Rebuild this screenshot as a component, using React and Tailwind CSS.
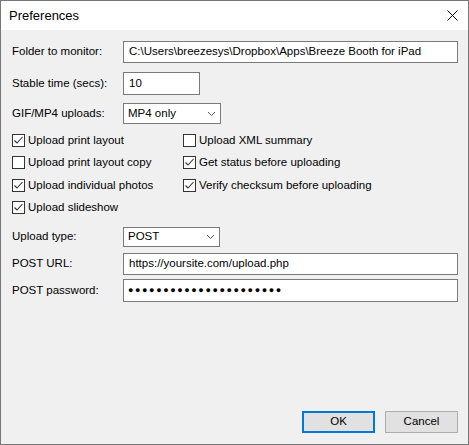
import React from 'react'

const font = { fontFamily: '"Liberation Sans", Arial, sans-serif' }

function Check({ checked, label }) {
  return (
    <div className="flex items-center h-[22.5px]">
      <div className="w-[13px] h-[13px] border border-[#333] bg-white flex items-center justify-center shrink-0">
        {checked && (
          <svg width="11" height="11" viewBox="0 0 11 11">
            <polyline points="1.5,5.5 4,8 9.5,2" fill="none" stroke="#333" strokeWidth="1.1" />
          </svg>
        )}
      </div>
      <span className="ml-[3px] text-[11.5px] text-black whitespace-nowrap">{label}</span>
    </div>
  )
}

function Chevron() {
  return (
    <svg width="9" height="6" viewBox="0 0 9 6" className="ml-auto mr-[4px]">
      <polyline points="1,1 4.5,4.5 8,1" fill="none" stroke="#555" strokeWidth="1" />
    </svg>
  )
}

function Row({ label, children, className }) {
  return (
    <div className={'flex items-center ' + (className || '')}>
      <div className="w-[111px] text-[11.5px] text-black whitespace-nowrap">{label}</div>
      {children}
    </div>
  )
}

export default function App() {
  return (
    <div className="w-[469px] h-[445px] border border-[#777] flex flex-col bg-[#f0f0f0]" style={font}>
      <div className="h-[29px] bg-white flex items-center pl-[8px] shrink-0">
        <span className="text-[13px] text-black">Preferences</span>
        <svg width="11" height="11" viewBox="0 0 11 11" className="ml-auto mr-[10px]">
          <path d="M0.5 0.5 L10.5 10.5 M10.5 0.5 L0.5 10.5" stroke="#000" strokeWidth="1" />
        </svg>
      </div>
      <div className="flex-1 flex flex-col pl-[11px] pr-[10px]">
        <Row label="Folder to monitor:" className="mt-[11px]">
          <div className="flex-1 h-[22px] bg-white border border-[#7a7a7a] flex items-center pl-[5px] text-[11.5px] whitespace-nowrap overflow-hidden">
            C:\Users\breezesys\Dropbox\Apps\Breeze Booth for iPad
          </div>
        </Row>
        <Row label="Stable time (secs):" className="mt-[9px]">
          <div className="w-[77px] h-[23px] bg-white border border-[#7a7a7a] flex items-center pl-[5px] text-[11.5px]">
            10
          </div>
        </Row>
        <Row label="GIF/MP4 uploads:" className="mt-[8px]">
          <div className="w-[98px] h-[21px] bg-white border border-[#7a7a7a] flex items-center pl-[4px] text-[11.5px]">
            MP4 only
            <Chevron />
          </div>
        </Row>
        <div className="mt-[5px] grid grid-cols-[171px_1fr]">
          <div className="flex flex-col">
            <Check checked label="Upload print layout" />
            <Check label="Upload print layout copy" />
            <Check checked label="Upload individual photos" />
            <Check checked label="Upload slideshow" />
          </div>
          <div className="flex flex-col">
            <Check label="Upload XML summary" />
            <Check checked label="Get status before uploading" />
            <Check checked label="Verify checksum before uploading" />
          </div>
        </div>
        <Row label="Upload type:" className="mt-[8px]">
          <div className="w-[97px] h-[20px] bg-white border border-[#7a7a7a] flex items-center pl-[4px] text-[11.5px]">
            POST
            <Chevron />
          </div>
        </Row>
        <Row label="POST URL:" className="mt-[6px]">
          <div className="flex-1 h-[22px] bg-white border border-[#7a7a7a] flex items-center pl-[5px] text-[11.5px]">
            https://yoursite.com/upload.php
          </div>
        </Row>
        <Row label="POST password:" className="mt-[4px]">
          <div className="flex-1 h-[23px] bg-white border border-[#7a7a7a] flex items-center pl-[4px] text-[9px] tracking-[1.6px]">
            ●●●●●●●●●●●●●●●●●●●●●●
          </div>
        </Row>
        <div className="mt-auto mb-[11px] flex justify-end gap-[10px]">
          <div className="w-[73px] h-[22px] bg-[#e1e1e1] border-2 border-[#0078d7] flex items-center justify-center text-[11.5px]">
            OK
          </div>
          <div className="w-[73px] h-[22px] bg-[#e1e1e1] border border-[#adadad] flex items-center justify-center text-[11.5px]">
            Cancel
          </div>
        </div>
      </div>
    </div>
  )
}
